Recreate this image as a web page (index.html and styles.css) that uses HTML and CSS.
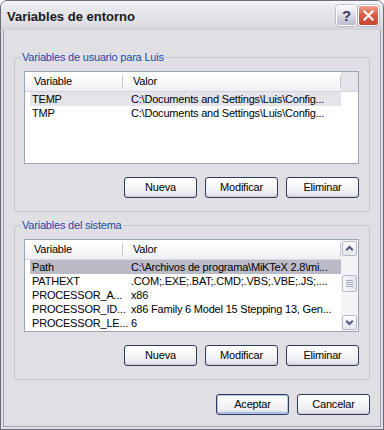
FILE: index.html
```html
<!DOCTYPE html>
<html lang="es">
<head>
<meta charset="utf-8">
<title>Variables de entorno</title>
<link rel="stylesheet" href="styles.css">
</head>
<body>
<div class="window">
  <div class="titlebar">
    <span class="title">Variables de entorno</span>
    <div class="caption-buttons">
      <button class="cap help" type="button">?</button>
      <button class="cap close" type="button" aria-label="Cerrar">
        <svg width="11" height="11" viewBox="0 0 11 11"><path d="M1.5 1.5L9.5 9.5M9.5 1.5L1.5 9.5" stroke="#fff" stroke-width="2.2" stroke-linecap="square" fill="none"/></svg>
      </button>
    </div>
  </div>
  <div class="client">
    <fieldset class="group group-user">
      <legend>Variables de usuario para Luis</legend>
      <div class="list">
        <div class="list-main">
          <div class="header">
            <div class="hcell c1">Variable</div>
            <div class="hcell c2">Valor</div>
          </div>
          <div class="row selected"><span class="cell c1">TEMP</span><span class="cell c2">C:\Documents and Settings\Luis\Config...</span></div>
          <div class="row"><span class="cell c1">TMP</span><span class="cell c2">C:\Documents and Settings\Luis\Config...</span></div>
        </div>
        <div class="filler"><div class="filler-head"></div></div>
      </div>
      <div class="buttons">
        <button class="btn" type="button">Nueva</button>
        <button class="btn" type="button">Modificar</button>
        <button class="btn" type="button">Eliminar</button>
      </div>
    </fieldset>
    <fieldset class="group group-system">
      <legend>Variables del sistema</legend>
      <div class="list">
        <div class="list-main">
          <div class="header">
            <div class="hcell c1">Variable</div>
            <div class="hcell c2">Valor</div>
          </div>
          <div class="row selected dark"><span class="cell c1">Path</span><span class="cell c2">C:\Archivos de programa\MiKTeX 2.8\mi...</span></div>
          <div class="row"><span class="cell c1">PATHEXT</span><span class="cell c2">.COM;.EXE;.BAT;.CMD;.VBS;.VBE;.JS;....</span></div>
          <div class="row"><span class="cell c1">PROCESSOR_A...</span><span class="cell c2">x86</span></div>
          <div class="row"><span class="cell c1">PROCESSOR_ID...</span><span class="cell c2">x86 Family 6 Model 15 Stepping 13, Gen...</span></div>
          <div class="row"><span class="cell c1">PROCESSOR_LE...</span><span class="cell c2">6</span></div>
        </div>
        <div class="scrollbar">
          <div class="sb-btn up">
            <svg width="9" height="7" viewBox="0 0 9 7"><polyline points="1.2,5.3 4.5,2 7.8,5.3" stroke="#4b5a7e" stroke-width="2" fill="none"/></svg>
          </div>
          <div class="sb-track">
            <div class="sb-thumb"><span></span><span></span><span></span><span></span></div>
          </div>
          <div class="sb-btn down">
            <svg width="9" height="7" viewBox="0 0 9 7"><polyline points="1.2,1.7 4.5,5 7.8,1.7" stroke="#4b5a7e" stroke-width="2" fill="none"/></svg>
          </div>
        </div>
      </div>
      <div class="buttons">
        <button class="btn" type="button">Nueva</button>
        <button class="btn" type="button">Modificar</button>
        <button class="btn" type="button">Eliminar</button>
      </div>
    </fieldset>
    <div class="dialog-buttons">
      <button class="btn default" type="button">Aceptar</button>
      <button class="btn" type="button">Cancelar</button>
    </div>
  </div>
</div>
</body>
</html>
```
FILE: styles.css
```css
* { box-sizing: border-box; }
html, body { margin: 0; padding: 0; }
body {
  width: 384px;
  height: 430px;
  overflow: hidden;
  background: #ffffff;
  font-family: "Liberation Sans", Arial, sans-serif;
  font-size: 11px;
  letter-spacing: -0.2px;
  color: #000;
}
.window {
  width: 384px;
  height: 430px;
  display: flex;
  flex-direction: column;
  background: #e0dfe3;
  border: 1px solid #6c6c7a;
  border-radius: 7px 7px 0 0;
  overflow: hidden;
}
.titlebar {
  height: 29px;
  flex: none;
  display: flex;
  align-items: flex-start;
  padding: 0 4px 0 6px;
  background: linear-gradient(#f8f8fa, #e9e9ee 20%, #dedee4 80%, #d0d0d8);
}
.title {
  flex: 1;
  font-size: 13px;
  font-weight: bold;
  letter-spacing: 0;
  line-height: 15px;
  margin-top: 8px;
  color: #1a1a1a;
}
.caption-buttons {
  display: flex;
  gap: 1px;
  margin-top: 4px;
}
.cap {
  width: 21px;
  height: 21px;
  padding: 0;
  border: 1px solid #ffffff;
  border-radius: 3px;
  display: flex;
  align-items: center;
  justify-content: center;
  box-shadow: 0 0 0 0.5px #9a9aac;
}
.help {
  background: linear-gradient(#fafafc, #dcdde7 45%, #b9bbcd);
  font-family: "Liberation Sans", Arial, sans-serif;
  font-weight: bold;
  font-size: 15px;
  letter-spacing: 0;
  color: #3a3e58;
  line-height: 1;
}
.close {
  background: linear-gradient(#f0a18e, #dc5d48 45%, #c8432f);
}
.client {
  flex: 1;
  margin: 0 2px 2px;
  border: 1px solid #a2a2ae;
  border-top: 0;
  display: flex;
  flex-direction: column;
}
.group {
  margin: 0 10px;
  padding: 7px 10px 13px 9px;
  border: 1px solid #c4c4ce;
  border-radius: 4px;
  min-width: 0;
}
.group-user { margin-top: 21px; }
.group-system { margin-top: 7px; }
.group legend {
  margin-left: -3px;
  padding: 0 1px;
  line-height: 13px;
  color: #1b4aaa;
}
.list {
  height: 93px;
  border: 1px solid #9ba3b5;
  background: #ffffff;
  display: flex;
}
.list-main {
  width: 316px;
  flex: none;
}
.header {
  height: 20px;
  display: flex;
  background: linear-gradient(#ffffff, #f7f7f9 70%, #eeeef2);
  border-bottom: 1px solid #d6d6de;
}
.hcell {
  position: relative;
  line-height: 19px;
  white-space: nowrap;
}
.hcell::after {
  content: "";
  position: absolute;
  right: 0;
  top: 3px;
  bottom: 3px;
  width: 1px;
  background: #c6c6d0;
}
.hcell.c1 { width: 98px; padding-left: 9px; }
.hcell.c2 { width: 218px; padding-left: 10px; }
.row {
  height: 14px;
  line-height: 14px;
  margin-left: 5px;
  width: 311px;
  display: flex;
  white-space: nowrap;
}
.row.selected { background: #e4e4ea; }
.row.selected.dark { background: #bbbbc8; }
.cell.c1 { width: 93px; flex: none; padding-left: 2px; }
.cell.c2 { width: 218px; flex: none; padding-left: 8px; overflow: hidden; }
.filler { width: 17px; flex: none; }
.filler-head {
  height: 20px;
  background: #e4e4ea;
  border-bottom: 1px solid #d6d6de;
}
.scrollbar {
  width: 17px;
  flex: none;
  display: flex;
  flex-direction: column;
  background: #f4f4f7;
}
.sb-btn {
  width: 15px;
  height: 15px;
  margin: 1px 1px 0;
  border: 1px solid #b6bbcb;
  border-radius: 2px;
  background: linear-gradient(#fdfdfe, #e5e6ee);
  display: flex;
  align-items: center;
  justify-content: center;
}
.sb-btn.down { margin: 0 1px 1px; }
.sb-track {
  flex: 1;
  padding-top: 19px;
}
.sb-thumb {
  width: 15px;
  height: 17px;
  margin: 0 1px;
  border: 1px solid #b6bbcb;
  border-radius: 2px;
  background: linear-gradient(90deg, #f8f8fb, #e3e4ed);
  display: flex;
  flex-direction: column;
  align-items: center;
  justify-content: center;
  gap: 1px;
}
.sb-thumb span {
  width: 7px;
  height: 1px;
  background: #a3a9c0;
}
.buttons {
  display: flex;
  justify-content: flex-end;
  gap: 8px;
  margin-top: 13px;
}
.dialog-buttons {
  display: flex;
  justify-content: flex-end;
  gap: 8px;
  margin: 14px 10px 0;
}
.btn {
  width: 73px;
  height: 21px;
  padding: 0;
  border: 1px solid #2e3b5a;
  border-radius: 3px;
  background: linear-gradient(#ffffff, #f8f8fa 40%, #ebebf1 80%, #d8d8e2);
  box-shadow: inset 0 -1px 0 #cfcfda;
  font: inherit;
  letter-spacing: inherit;
  color: #000;
  line-height: 19px;
}
.btn.default {
  box-shadow: inset 0 0 0 1px #b3c3e6, inset 0 -2px 0 #a9bbe4;
}
```
